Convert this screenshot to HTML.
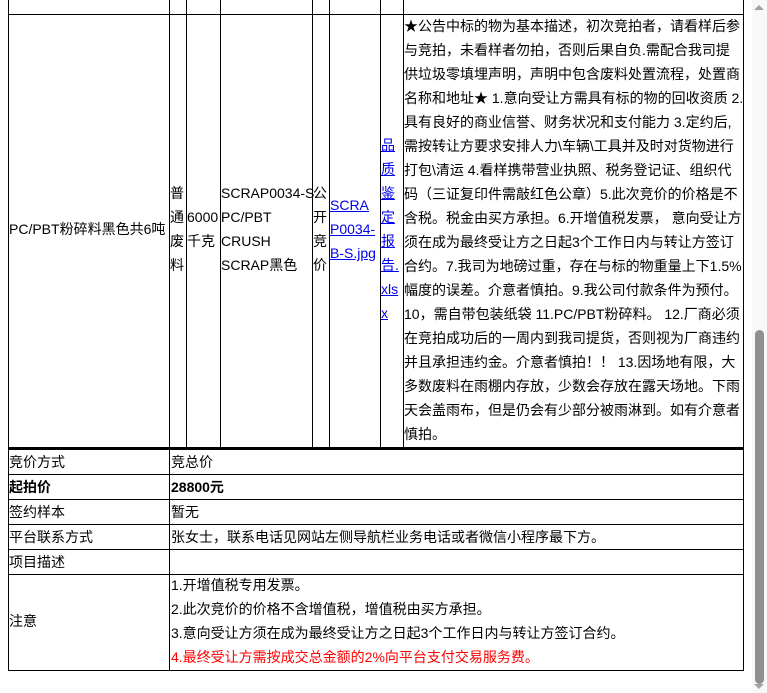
<!DOCTYPE html>
<html><head><meta charset="utf-8"><style>
body{margin:0;width:767px;height:693px;overflow:hidden;background:#fff;position:relative;font-family:"Liberation Sans","Noto Sans CJK SC",sans-serif;font-size:14px;color:#000}
.v{position:absolute;width:1px;background:#000}
.h{position:absolute;height:1px;background:#000}
.t{position:absolute;white-space:nowrap;line-height:24px}
a{color:#00e;text-decoration:underline}
</style></head><body>
<div class="h" style="left:8px;top:14px;width:736px"></div>
<div class="v" style="left:8px;top:0;height:671px"></div>
<div class="v" style="left:743px;top:0;height:671px"></div>
<div class="v" style="left:169px;top:0;height:671px"></div>
<div class="v" style="left:186px;top:0;height:448px"></div>
<div class="v" style="left:220px;top:0;height:448px"></div>
<div class="v" style="left:312px;top:0;height:448px"></div>
<div class="v" style="left:329px;top:0;height:448px"></div>
<div class="v" style="left:380px;top:0;height:448px"></div>
<div class="v" style="left:403px;top:0;height:448px"></div>
<div class="h" style="left:8px;top:447px;width:736px;height:3px"></div>
<div class="h" style="left:8px;top:474px;width:736px"></div>
<div class="h" style="left:8px;top:499px;width:736px"></div>
<div class="h" style="left:8px;top:524px;width:736px"></div>
<div class="h" style="left:8px;top:549px;width:736px"></div>
<div class="h" style="left:8px;top:574px;width:736px"></div>
<div class="h" style="left:8px;top:670px;width:736px"></div>
<div style="position:absolute;left:381px;top:0;width:22px;height:8px;overflow:hidden"><div class="t" style="left:0;top:-19px">意</div></div>

<div class="t" style="left:9px;top:217px">PC/PBT粉碎料黑色共6吨</div>
<div class="t" style="left:170px;top:181px">普<br>通<br>废<br>料</div>
<div class="t" style="left:187px;top:205px">6000<br>千克</div>
<div class="t" style="left:221px;top:181px">SCRAP0034-S<br>PC/PBT<br>CRUSH<br>SCRAP黑色</div>
<div class="t" style="left:313px;top:181px">公<br>开<br>竞<br>价</div>
<div class="t" style="left:330px;top:193px"><a>SCRA<br>P0034-<br>B-S.jpg</a></div>
<div class="t" style="left:381px;top:133px"><a>品<br>质<br>鉴<br>定<br>报<br>告.<br>xls<br>x</a></div>
<div class="t" style="left:404px;top:14px">★公告中标的物为基本描述，初次竞拍者，请看样后参<br>与竞拍，未看样者勿拍，否则后果自负.需配合我司提<br>供垃圾零填埋声明，声明中包含废料处置流程，处置商<br>名称和地址★ 1.意向受让方需具有标的物的回收资质 2.<br>具有良好的商业信誉、财务状况和支付能力 3.定约后,<br>需按转让方要求安排人力\车辆\工具并及时对货物进行<br>打包\清运 4.看样携带营业执照、税务登记证、组织代<br>码（三证复印件需敲红色公章）5.此次竞价的价格是不<br>含税。税金由买方承担。6.开增值税发票， 意向受让方<br>须在成为最终受让方之日起3个工作日内与转让方签订<br>合约。7.我司为地磅过重，存在与标的物重量上下1.5%<br>幅度的误差。介意者慎拍。9.我公司付款条件为预付。<br>10，需自带包装纸袋 11.PC/PBT粉碎料。 12.厂商必须<br>在竞拍成功后的一周内到我司提货，否则视为厂商违约<br>并且承担违约金。介意者慎拍！！ 13.因场地有限，大<br>多数废料在雨棚内存放，少数会存放在露天场地。下雨<br>天会盖雨布，但是仍会有少部分被雨淋到。如有介意者<br>慎拍。</div>

<div class="t" style="left:9px;top:450px">竞价方式</div><div class="t" style="left:171px;top:450px">竞总价</div>
<div class="t" style="left:9px;top:475px;font-weight:bold">起拍价</div><div class="t" style="left:171px;top:475px;font-weight:bold">28800元</div>
<div class="t" style="left:9px;top:500px">签约样本</div><div class="t" style="left:171px;top:500px">暂无</div>
<div class="t" style="left:9px;top:525px">平台联系方式</div><div class="t" style="left:171px;top:525px">张女士，联系电话见网站左侧导航栏业务电话或者微信小程序最下方。</div>
<div class="t" style="left:9px;top:550px">项目描述</div>
<div class="t" style="left:9px;top:609px">注意</div>
<div class="t" style="left:171px;top:573px">1.开增值税专用发票。</div>
<div class="t" style="left:171px;top:597px">2.此次竞价的价格不含增值税，增值税由买方承担。</div>
<div class="t" style="left:171px;top:621px">3.意向受让方须在成为最终受让方之日起3个工作日内与转让方签订合约。</div>
<div class="t" style="left:171px;top:645px;color:#f00">4.最终受让方需按成交总金额的2%向平台支付交易服务费。</div>

<div style="position:absolute;left:752px;top:0;width:15px;height:693px;background:#f8f8f8"></div>
<div style="position:absolute;left:754px;top:5px;width:0;height:0;border-left:5px solid transparent;border-right:5px solid transparent;border-bottom:5px solid #a3a3a3"></div>
<div style="position:absolute;left:755px;top:330px;width:9px;height:354px;background:#909090;border-radius:5px"></div>
<div style="position:absolute;left:754px;top:684px;width:0;height:0;border-left:5px solid transparent;border-right:5px solid transparent;border-top:5px solid #a3a3a3"></div>
</body></html>
